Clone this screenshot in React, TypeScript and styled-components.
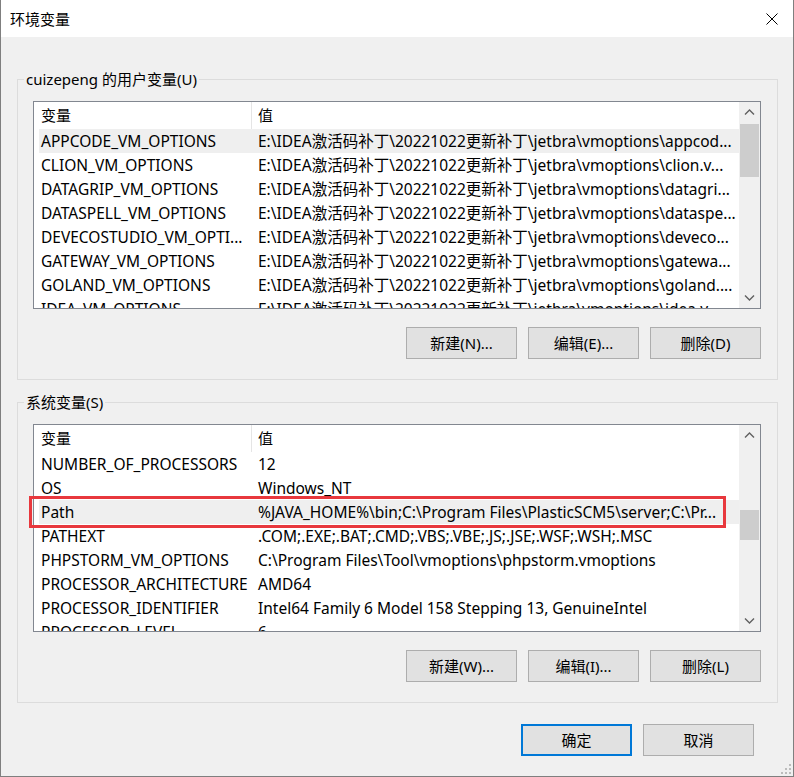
import React from 'react'
import styled, { createGlobalStyle } from 'styled-components'

const GlobalStyle = createGlobalStyle`
  html, body {
    margin: 0;
    padding: 0;
    background: #ffffff;
  }
  body {
    font-family: "Noto Sans", "Noto Sans CJK SC", sans-serif;
    font-size: 15px;
    color: #000000;
  }
`

const HEADER_HEIGHT = 27
const ROW_HEIGHT = 24

const Window = styled.div`
  position: relative;
  width: 794px;
  height: 777px;
  box-sizing: border-box;
  border: 1px solid #7f7f7f;
  border-top: none;
  background: #f0f0f0;
  display: flex;
  flex-direction: column;
`

const TitleBar = styled.div`
  height: 37px;
  flex: 0 0 37px;
  background: #ffffff;
  display: flex;
  align-items: center;
  justify-content: space-between;
  padding-left: 9px;
`

const Title = styled.span`
  font-size: 15px;
  line-height: 20px;
`

const CloseButton = styled.div`
  width: 42px;
  height: 37px;
  display: flex;
  align-items: center;
  justify-content: center;
`

const Body = styled.div`
  flex: 1;
  display: flex;
  flex-direction: column;
  padding: 32px 15px 0 16px;
`

const Group = styled.fieldset<{ $gap?: number }>`
  margin: ${p => p.$gap || 0}px 0 0 0;
  padding: 12px 16px 20px 15px;
  border: 1px solid #dcdcdc;
  min-width: 0;
`

const Legend = styled.legend`
  padding: 0 2px;
  margin-left: -9px;
  font-size: 15px;
  line-height: 20px;
`

const ListFrame = styled.div`
  position: relative;
`

const ListBox = styled.div`
  height: 208px;
  box-sizing: border-box;
  border: 1px solid #828790;
  background: #ffffff;
  display: flex;
  overflow: hidden;
`

const ListContent = styled.div`
  flex: 1;
  min-width: 0;
  overflow: hidden;
  padding-left: 5px;
  font-size: 15.5px;
`

const HeaderRow = styled.div`
  display: grid;
  grid-template-columns: 213px 1fr;
  height: ${HEADER_HEIGHT}px;
`

const HeaderCell = styled.div<{ $divider?: boolean }>`
  box-sizing: border-box;
  padding-left: ${p => (p.$divider ? 2 : 6)}px;
  border-right: ${p => (p.$divider ? '1px solid #e5e5e5' : 'none')};
  font-size: 15px;
  line-height: ${HEADER_HEIGHT}px;
  white-space: nowrap;
`

const Row = styled.div<{ $selected?: boolean }>`
  display: grid;
  grid-template-columns: 213px 1fr;
  height: ${ROW_HEIGHT}px;
  background: ${p => (p.$selected ? '#efefef' : 'transparent')};
`

const Cell = styled.div<{ $first?: boolean }>`
  padding-left: ${p => (p.$first ? 2 : 6)}px;
  line-height: ${ROW_HEIGHT}px;
  white-space: nowrap;
  overflow: hidden;
`

const ScrollBar = styled.div`
  width: 21px;
  flex: 0 0 21px;
  background: #f0f0f0;
  display: flex;
  flex-direction: column;
`

const ArrowButton = styled.div`
  height: 21px;
  flex: 0 0 21px;
  display: flex;
  align-items: center;
  justify-content: center;
`

const Track = styled.div`
  flex: 1;
  display: flex;
  flex-direction: column;
`

const Thumb = styled.div`
  margin: 0 1px;
  background: #cdcdcd;
`

const Callout = styled.div`
  position: absolute;
  left: -4px;
  width: 697px;
  height: 32px;
  box-sizing: border-box;
  border: 3px solid #e8383d;
  pointer-events: none;
`

const ButtonRow = styled.div<{ $top: number; $right?: number }>`
  display: flex;
  justify-content: flex-end;
  gap: 11px;
  margin-top: ${p => p.$top}px;
  margin-right: ${p => p.$right || 0}px;
`

const Button = styled.button<{ $primary?: boolean }>`
  width: 111px;
  height: 32px;
  box-sizing: border-box;
  background: #e1e1e1;
  border: ${p => (p.$primary ? '2px solid #0078d7' : '1px solid #adadad')};
  font-family: "Noto Sans", "Noto Sans CJK SC", sans-serif;
  font-size: 15px;
  color: #000000;
  padding: 0;
  line-height: 20px;
`

const Grip = styled.svg`
  position: absolute;
  right: 2px;
  bottom: 2px;
`

const Chevron: React.FC<{ down?: boolean }> = ({ down }) => (
  <svg width="11" height="7" viewBox="0 0 11 7">
    <path
      d={down ? 'M1 1.5 L5.5 6 L10 1.5' : 'M1 5.5 L5.5 1 L10 5.5'}
      fill="none"
      stroke="#606060"
      strokeWidth="1.4"
    />
  </svg>
)

interface EnvVar {
  name: string
  value: string
}

interface VarListProps {
  rows: EnvVar[]
  selected: number
  thumbTop: number
  thumbHeight: number
  callout?: boolean
}

const VarList: React.FC<VarListProps> = ({ rows, selected, thumbTop, thumbHeight, callout }) => (
  <ListFrame>
    <ListBox>
      <ListContent>
        <HeaderRow>
          <HeaderCell $divider>变量</HeaderCell>
          <HeaderCell>值</HeaderCell>
        </HeaderRow>
        {rows.map((row, i) => (
          <Row key={row.name} $selected={i === selected}>
            <Cell $first>{row.name}</Cell>
            <Cell>{row.value}</Cell>
          </Row>
        ))}
      </ListContent>
      <ScrollBar>
        <ArrowButton>
          <Chevron />
        </ArrowButton>
        <Track>
          <Thumb style={{ marginTop: thumbTop, height: thumbHeight }} />
        </Track>
        <ArrowButton>
          <Chevron down />
        </ArrowButton>
      </ScrollBar>
    </ListBox>
    {callout && <Callout style={{ top: 1 + HEADER_HEIGHT + selected * ROW_HEIGHT - 4 }} />}
  </ListFrame>
)

const patch = 'E:\\IDEA激活码补丁\\20221022更新补丁\\jetbra\\vmoptions\\'

const userVars: EnvVar[] = [
  { name: 'APPCODE_VM_OPTIONS', value: patch + 'appcod...' },
  { name: 'CLION_VM_OPTIONS', value: patch + 'clion.v...' },
  { name: 'DATAGRIP_VM_OPTIONS', value: patch + 'datagri...' },
  { name: 'DATASPELL_VM_OPTIONS', value: patch + 'dataspe...' },
  { name: 'DEVECOSTUDIO_VM_OPTI...', value: patch + 'deveco...' },
  { name: 'GATEWAY_VM_OPTIONS', value: patch + 'gatewa...' },
  { name: 'GOLAND_VM_OPTIONS', value: patch + 'goland....' },
  { name: 'IDEA_VM_OPTIONS', value: patch + 'idea.v...' }
]

const systemVars: EnvVar[] = [
  { name: 'NUMBER_OF_PROCESSORS', value: '12' },
  { name: 'OS', value: 'Windows_NT' },
  { name: 'Path', value: '%JAVA_HOME%\\bin;C:\\Program Files\\PlasticSCM5\\server;C:\\Pr...' },
  { name: 'PATHEXT', value: '.COM;.EXE;.BAT;.CMD;.VBS;.VBE;.JS;.JSE;.WSF;.WSH;.MSC' },
  { name: 'PHPSTORM_VM_OPTIONS', value: 'C:\\Program Files\\Tool\\vmoptions\\phpstorm.vmoptions' },
  { name: 'PROCESSOR_ARCHITECTURE', value: 'AMD64' },
  { name: 'PROCESSOR_IDENTIFIER', value: 'Intel64 Family 6 Model 158 Stepping 13, GenuineIntel' },
  { name: 'PROCESSOR_LEVEL', value: '6' }
]

const App: React.FC = () => {
  return (
    <>
      <GlobalStyle />
      <Window>
        <TitleBar>
          <Title>环境变量</Title>
          <CloseButton>
            <svg width="12" height="12" viewBox="0 0 12 12">
              <path d="M0.5 0.5 L11.5 11.5 M11.5 0.5 L0.5 11.5" stroke="#000" strokeWidth="1" />
            </svg>
          </CloseButton>
        </TitleBar>
        <Body>
          <Group>
            <Legend>cuizepeng 的用户变量(U)</Legend>
            <VarList rows={userVars} selected={0} thumbTop={1} thumbHeight={53} />
            <ButtonRow $top={18}>
              <Button>新建(N)...</Button>
              <Button>编辑(E)...</Button>
              <Button>删除(D)</Button>
            </ButtonRow>
          </Group>
          <Group $gap={12}>
            <Legend>系统变量(S)</Legend>
            <VarList rows={systemVars} selected={2} thumbTop={64} thumbHeight={30} callout />
            <ButtonRow $top={18}>
              <Button>新建(W)...</Button>
              <Button>编辑(I)...</Button>
              <Button>删除(L)</Button>
            </ButtonRow>
          </Group>
          <ButtonRow $top={21} $right={24}>
            <Button $primary>确定</Button>
            <Button>取消</Button>
          </ButtonRow>
        </Body>
        <Grip width="12" height="12" viewBox="0 0 12 12">
          <rect x="10" y="2" width="2" height="2" fill="#bcbcbc" />
          <rect x="6" y="6" width="2" height="2" fill="#bcbcbc" />
          <rect x="10" y="6" width="2" height="2" fill="#bcbcbc" />
          <rect x="2" y="10" width="2" height="2" fill="#bcbcbc" />
          <rect x="6" y="10" width="2" height="2" fill="#bcbcbc" />
          <rect x="10" y="10" width="2" height="2" fill="#bcbcbc" />
        </Grip>
      </Window>
    </>
  )
}

export default App
